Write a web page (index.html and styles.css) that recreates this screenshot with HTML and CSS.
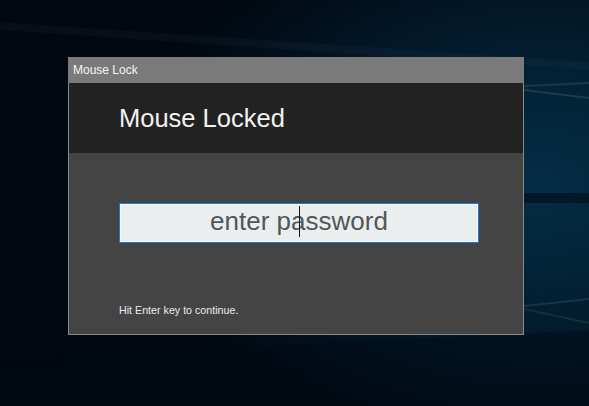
FILE: index.html
```html
<!DOCTYPE html>
<html>
<head>
<meta charset="utf-8">
<link rel="stylesheet" href="styles.css">
</head>
<body>
<svg class="wallpaper" width="589" height="406" viewBox="0 0 589 406">
  <defs>
    <radialGradient id="glow" cx="0.92" cy="0.45" r="0.7">
      <stop offset="0" stop-color="#042d45"/>
      <stop offset="0.35" stop-color="#032236"/>
      <stop offset="0.75" stop-color="#02111f"/>
      <stop offset="1" stop-color="#01080f"/>
    </radialGradient>
  </defs>
  <rect width="589" height="406" fill="url(#glow)"/>
  <rect x="0" y="193" width="589" height="10" fill="#010a14" opacity="0.55"/>
  <path d="M0 22 L589 62 L589 70 L0 30 Z" fill="#6f8aa0" opacity="0.05"/>
  <path d="M524 85 L589 82 L589 84 L524 87 Z" fill="#8a99a6" opacity="0.18"/>
  <path d="M524 89 L589 97 L589 99 L524 91 Z" fill="#8a99a6" opacity="0.2"/>
  <path d="M524 305 L589 298 L589 300 L524 307 Z" fill="#8a99a6" opacity="0.16"/>
  <path d="M524 308 L589 322 L589 324 L524 310 Z" fill="#8a99a6" opacity="0.14"/>
  <path d="M0 360 L589 330 L589 406 L0 406 Z" fill="#010810" opacity="0.35"/>
</svg>
<div class="window">
  <div class="titlebar">Mouse Lock</div>
  <div class="header">Mouse Locked</div>
  <div class="content">
    <div class="field">
      <span class="placeholder">enter password</span>
      <span class="caret"></span>
    </div>
    <div class="hint">Hit Enter key to continue.</div>
  </div>
</div>
</body>
</html>
```
FILE: styles.css
```css
html, body {
  margin: 0;
  padding: 0;
}
body {
  width: 589px;
  height: 406px;
  overflow: hidden;
  position: relative;
  background: #021221;
  font-family: "Liberation Sans", Arial, sans-serif;
  padding: 57px 0 0 68px;
  box-sizing: border-box;
}
.wallpaper {
  position: absolute;
  left: 0;
  top: 0;
}
.window {
  position: relative;
  width: 456px;
  height: 278px;
  box-sizing: border-box;
  border: 1px solid #8a8a8a;
  border-top-color: #7a7a7a;
  display: flex;
  flex-direction: column;
  background: #444444;
}
.titlebar {
  height: 25px;
  margin: 0 -1px;
  background: #7a7a7a;
  color: #f4f4f4;
  font-size: 12px;
  line-height: 24px;
  padding-left: 5px;
}
.header {
  height: 70px;
  background: #222222;
  color: #f2f2f2;
  font-size: 25.5px;
  display: flex;
  align-items: center;
  padding-left: 50px;
}
.content {
  flex: 1;
  display: flex;
  flex-direction: column;
  padding: 50px 0 0 50px;
}
.field {
  position: relative;
  width: 360px;
  height: 40px;
  box-sizing: border-box;
  border: 1px solid #1a7ad6;
  box-shadow: inset 0 0 0 1px #f6f8f8;
  background: #eaeeee;
  text-align: center;
  font-size: 26px;
  line-height: 35px;
  color: #50565a;
}
.caret {
  position: absolute;
  left: 179px;
  top: 2px;
  width: 1px;
  height: 31px;
  background: #111;
}
.hint {
  margin-top: 61px;
  font-size: 10.7px;
  line-height: 12px;
  color: #ececec;
}
```
